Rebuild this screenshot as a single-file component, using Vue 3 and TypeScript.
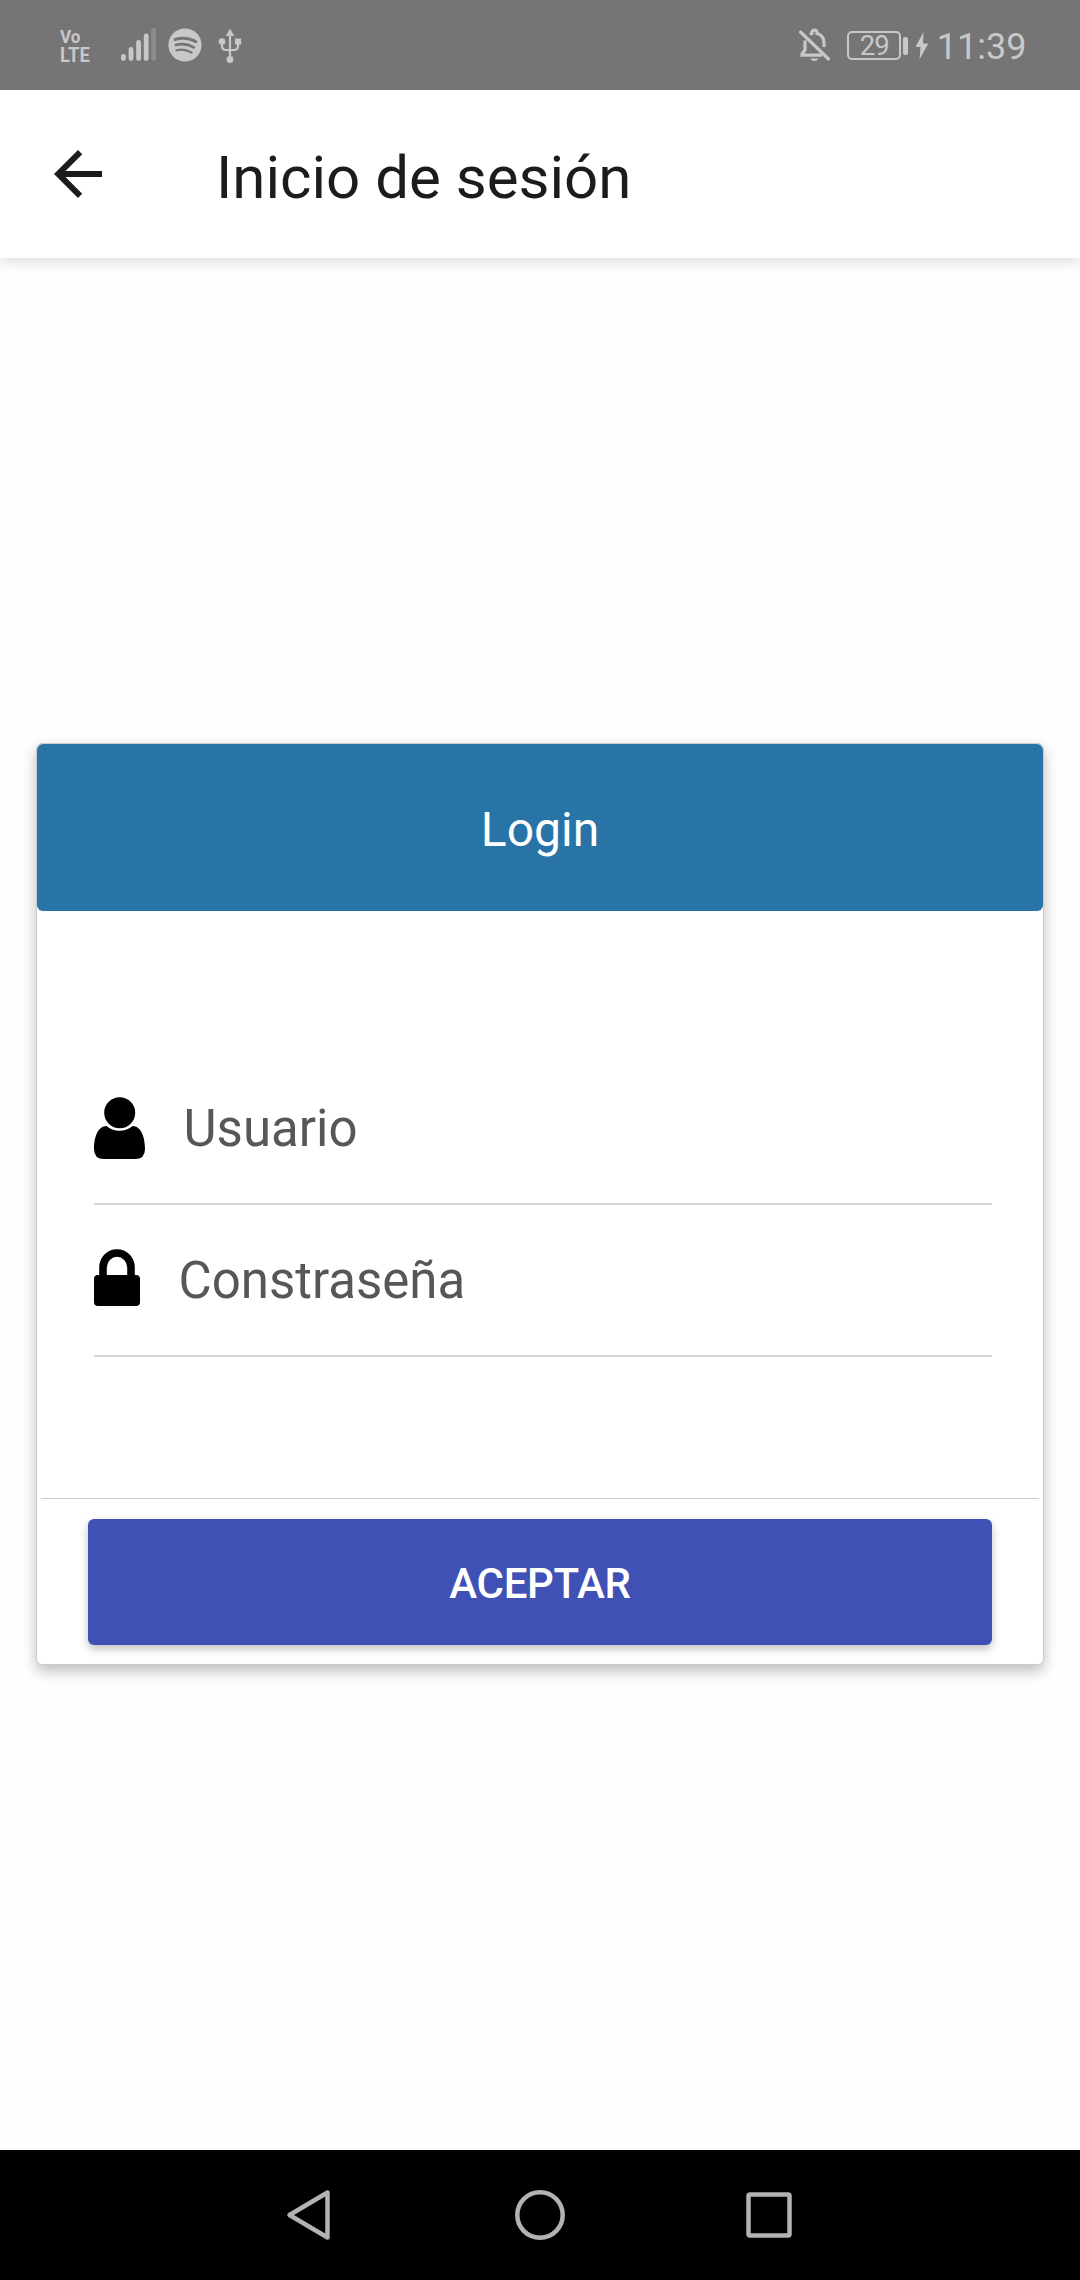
<script setup lang="ts">
import { ref } from 'vue'

const title = 'Inicio de sesión'
const user = ref('')
const password = ref('')
const bars = [
  { x: 1, h: 7 },
  { x: 8.6, h: 14 },
  { x: 16.2, h: 21 },
  { x: 23.8, h: 27.5 },
  { x: 31.2, h: 33 },
]
</script>

<template>
  <div class="screen">
    <div class="status">
      <div class="volte"><span class="vo">Vo</span><span class="lte">LTE</span></div>
      <svg class="signal" width="38" height="36" viewBox="0 0 38 36">
        <rect v-for="(b, i) in bars" :key="b.x" :x="b.x" :y="34 - b.h" width="4.8" :height="b.h" rx="2.4" :class="{ dim: i === 4 }" />
      </svg>
      <svg class="music" width="34" height="34" viewBox="0 0 34 34">
        <circle cx="17" cy="17" r="16.6" />
        <g class="waves">
          <path d="M7 11.5C14 9.4 22 10.3 28 13.7" stroke-width="3" />
          <path d="M7.8 17C14 15.3 20.5 16.2 25.8 19.3" stroke-width="2.6" />
          <path d="M8.5 22.3C13.5 21.1 18.8 21.7 23.5 24.5" stroke-width="2.2" />
        </g>
      </svg>
      <svg class="usb" width="24" height="36" viewBox="0 0 24 36">
        <path d="M12 7V31M4 14V18Q4 22 8 22H16Q20 22 20 18V14" fill="none" stroke="#c8c8c8" stroke-width="2.2" />
        <path d="M12 .5L16.2 8H7.8Z" />
        <circle cx="12" cy="31.5" r="3.4" />
        <circle cx="4" cy="13.5" r="3.3" />
        <rect x="17" y="10.5" width="6.2" height="6" />
      </svg>
      <div class="spacer"></div>
      <svg class="bell" width="32" height="36" viewBox="0 0 32 36">
        <path d="M6 12.5V22L3 26V27.2H23M11 6.5Q12 5.8 13 5.5V4A2.6 2.6 0 0 1 18 4V5.5Q25 7.5 25 15V19" fill="none" stroke="#c8c8c8" stroke-width="3.2" />
        <path d="M1.5 4L29.5 31" stroke="#c8c8c8" stroke-width="3.2" stroke-linecap="round" />
        <path d="M11.5 30.5H19A3.8 3 0 0 1 11.5 30.5Z" />
      </svg>
      <div class="battery">29</div>
      <div class="cap"></div>
      <svg class="bolt" width="14" height="28" viewBox="0 0 14 28">
        <path d="M8.5 0L.5 15H5.5L4.5 27.5L13.3 11.5H8Z" />
      </svg>
      <span class="time">11:39</span>
    </div>

    <header class="bar">
      <svg width="72" height="72" viewBox="0 0 24 24">
        <path fill="#1c1c1e" d="M20 11H7.83l5.59-5.59L12 4l-8 8 8 8 1.41-1.41L7.83 13H20v-2z" />
      </svg>
      <h1>{{ title }}</h1>
    </header>

    <main>
      <section class="card">
        <div class="card-head">Login</div>
        <div class="fields">
          <label class="field">
            <svg width="51" height="62" viewBox="0 0 51 62">
              <circle cx="25.7" cy="15.8" r="15.5" />
              <path d="M12.5 29C19 35.3 32 35.3 38.5 29C47 29 51 40 51 52Q51 62 41 62H10Q0 62 0 52C0 40 4 29 12.5 29Z" />
            </svg>
            <input v-model="user" type="text" placeholder="Usuario" />
          </label>
          <label class="field second">
            <svg width="46" height="57" viewBox="0 0 46 57">
              <path d="M9 28V18.5A14 14.5 0 0 1 37 18.5V28" fill="none" stroke="#000" stroke-width="7.6" />
              <rect y="26" width="46" height="31" rx="4" />
            </svg>
            <input v-model="password" type="password" placeholder="Constraseña" />
          </label>
        </div>
        <div class="actions"><button type="button">ACEPTAR</button></div>
      </section>
    </main>

    <nav>
      <svg width="46" height="52" viewBox="0 0 46 52">
        <path d="M3.5 26L41.5 3.5V48.5Z" />
      </svg>
      <svg width="52" height="52" viewBox="0 0 52 52">
        <circle cx="27" cy="26" r="22.7" />
      </svg>
      <svg width="46" height="46" viewBox="0 0 46 46">
        <rect x="2.5" y="2.5" width="41" height="41" rx="1.5" />
      </svg>
    </nav>
  </div>
</template>

<style>
body {
  margin: 0;
  background: #fefefe;
}
</style>

<style scoped>
.screen {
  width: 1080px;
  height: 2280px;
  display: flex;
  flex-direction: column;
  background: #fefefe;
  font-family: Roboto, sans-serif;
  overflow: hidden;
}
svg {
  display: block;
  flex: none;
  overflow: visible;
}
.status {
  position: relative;
  z-index: 1;
  height: 90px;
  flex: none;
  box-sizing: border-box;
  display: flex;
  align-items: flex-start;
  padding: 27px 53.5px 0 60px;
  background: #757575;
  color: #c8c8c8;
}
.status svg {
  fill: #c8c8c8;
}
.volte {
  width: 60px;
  display: flex;
  flex-direction: column;
  align-items: flex-start;
  font-weight: 700;
  font-size: 20px;
  line-height: 19px;
}
.volte span {
  display: block;
  height: 19px;
  transform: scaleX(0.93);
  transform-origin: 0 0;
}
.volte .vo {
  font-size: 19px;
  transform: scaleX(0.9);
}
.signal .dim {
  fill: #8c8c8c;
}
.music {
  margin: 1px 0 0 9.5px;
}
.waves {
  fill: none;
  stroke: #757575;
  stroke-linecap: round;
}
.usb {
  margin: 1px 0 0 16px;
}
.spacer {
  flex: 1;
}
.bell {
  margin: 1px 16.5px 0 0;
}
.battery {
  width: 54px;
  height: 29px;
  box-sizing: border-box;
  margin-top: 4px;
  border: 2px solid #c8c8c8;
  border-radius: 5px;
  font-size: 27.5px;
  line-height: 26px;
  letter-spacing: -0.8px;
  text-align: center;
}
.cap {
  width: 5px;
  height: 18px;
  margin: 10px 6.5px 0 2px;
  border-radius: 2px;
  background: #c8c8c8;
}
.bolt {
  margin: 5px 8px 0 0;
}
.time {
  font-size: 36px;
  line-height: 42px;
  margin-top: -1px;
}
.bar {
  height: 168px;
  flex: none;
  display: flex;
  align-items: center;
  padding-left: 42px;
  background: #fff;
  box-shadow: 0 2px 14px rgba(0, 0, 0, 0.17);
}
.bar h1 {
  margin: 7px 0 0 102px;
  font-size: 60px;
  line-height: 72px;
  font-weight: 400;
  color: #1c1c1e;
}
main {
  flex: 1;
  padding: 485px 36px 0;
}
.card {
  border: 1px solid #ccc;
  border-radius: 6px;
  background: #fff;
  height: 920px;
  display: flex;
  flex-direction: column;
  box-shadow: 0 6px 14px rgba(0, 0, 0, 0.26);
}
.card-head {
  height: 167px;
  flex: none;
  border-radius: 6px;
  background: #2874a7;
  color: #fff;
  font-size: 48px;
  line-height: 171px;
  text-align: center;
}
.fields {
  flex: 1;
  padding: 142px 51px 0 57px;
}
.field {
  height: 150px;
  display: flex;
  align-items: center;
  border-bottom: 2px solid #d6d6db;
}
.field.second {
  border-color: #d6d6d9;
}
.field.second svg {
  margin-bottom: 5px;
}
input {
  flex: 1;
  min-width: 0;
  height: 76px;
  margin: 1px 0 0 38.5px;
  padding: 0;
  border: 0;
  outline: 0;
  background: none;
  font: 400 51px/76px Roboto, sans-serif;
  color: #575757;
}
input::placeholder {
  color: #575757;
  opacity: 1;
}
.actions {
  margin: 0 4px;
  padding: 20px 47px 19px;
  border-top: 1px solid #ccc;
}
button {
  display: block;
  width: 100%;
  height: 126px;
  padding: 3px 0 0;
  border: 0;
  border-radius: 6px;
  background: #3f51b5;
  color: #fff;
  font: 500 42px/123px Roboto, sans-serif;
  letter-spacing: -0.3px;
  box-shadow: 0 4px 8px rgba(0, 0, 0, 0.25);
}
nav {
  height: 130px;
  flex: none;
  display: flex;
  align-items: center;
  justify-content: space-between;
  box-sizing: border-box;
  padding: 0 288px 0 286px;
  background: #000;
}
nav svg {
  fill: none;
  stroke: #b3b3b3;
  stroke-width: 4.5px;
  stroke-linejoin: round;
}
</style>
